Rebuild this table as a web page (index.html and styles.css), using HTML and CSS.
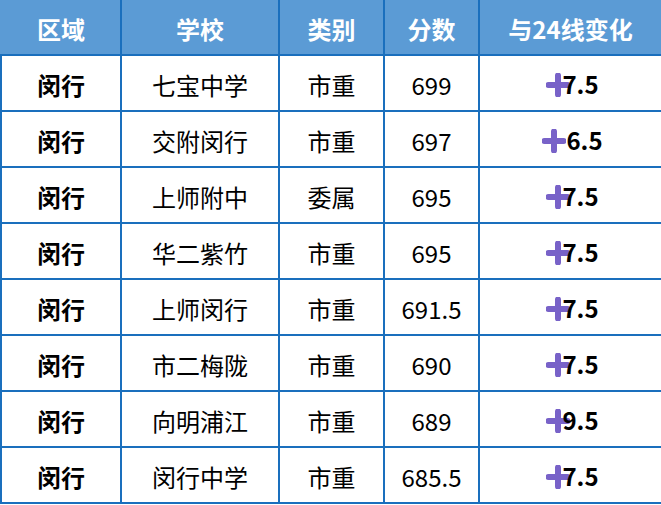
FILE: index.html
```html
<!DOCTYPE html>
<html>
<head>
<meta charset="utf-8">
<link rel="stylesheet" href="styles.css">
</head>
<body>
<table class="score">
<colgroup>
<col class="c1"><col class="c2"><col class="c3"><col class="c4"><col class="c5">
</colgroup>
<thead>
<tr><th>区域</th><th>学校</th><th>类别</th><th>分数</th><th>与24线变化</th></tr>
</thead>
<tbody>
<tr><td class="area">闵行</td><td>七宝中学</td><td>市重</td><td>699</td><td class="chg"><span class="plus"><svg viewBox="0 0 24 24" width="24" height="24"><path d="M12 2.5V21.5M2.5 12H21.5" stroke="#7862c8" stroke-width="6" stroke-linecap="round"/></svg></span><b>7.5</b></td></tr>
<tr><td class="area">闵行</td><td>交附闵行</td><td>市重</td><td>697</td><td class="chg"><span class="plus wide"><svg viewBox="0 0 24 24" width="24" height="24"><path d="M12 2.5V21.5M2.5 12H21.5" stroke="#7862c8" stroke-width="6" stroke-linecap="round"/></svg></span><b>6.5</b></td></tr>
<tr><td class="area">闵行</td><td>上师附中</td><td>委属</td><td>695</td><td class="chg"><span class="plus"><svg viewBox="0 0 24 24" width="24" height="24"><path d="M12 2.5V21.5M2.5 12H21.5" stroke="#7862c8" stroke-width="6" stroke-linecap="round"/></svg></span><b>7.5</b></td></tr>
<tr><td class="area">闵行</td><td>华二紫竹</td><td>市重</td><td>695</td><td class="chg"><span class="plus"><svg viewBox="0 0 24 24" width="24" height="24"><path d="M12 2.5V21.5M2.5 12H21.5" stroke="#7862c8" stroke-width="6" stroke-linecap="round"/></svg></span><b>7.5</b></td></tr>
<tr><td class="area">闵行</td><td>上师闵行</td><td>市重</td><td>691.5</td><td class="chg"><span class="plus"><svg viewBox="0 0 24 24" width="24" height="24"><path d="M12 2.5V21.5M2.5 12H21.5" stroke="#7862c8" stroke-width="6" stroke-linecap="round"/></svg></span><b>7.5</b></td></tr>
<tr><td class="area">闵行</td><td>市二梅陇</td><td>市重</td><td>690</td><td class="chg"><span class="plus"><svg viewBox="0 0 24 24" width="24" height="24"><path d="M12 2.5V21.5M2.5 12H21.5" stroke="#7862c8" stroke-width="6" stroke-linecap="round"/></svg></span><b>7.5</b></td></tr>
<tr><td class="area">闵行</td><td>向明浦江</td><td>市重</td><td>689</td><td class="chg"><span class="plus"><svg viewBox="0 0 24 24" width="24" height="24"><path d="M12 2.5V21.5M2.5 12H21.5" stroke="#7862c8" stroke-width="6" stroke-linecap="round"/></svg></span><b>9.5</b></td></tr>
<tr><td class="area">闵行</td><td>闵行中学</td><td>市重</td><td>685.5</td><td class="chg"><span class="plus"><svg viewBox="0 0 24 24" width="24" height="24"><path d="M12 2.5V21.5M2.5 12H21.5" stroke="#7862c8" stroke-width="6" stroke-linecap="round"/></svg></span><b>7.5</b></td></tr>
</tbody>
</table>
</body>
</html>
```
FILE: styles.css
```css
html, body {
  margin: 0;
  padding: 0;
  background: #ffffff;
}
.score {
  border-collapse: collapse;
  table-layout: fixed;
  width: 661px;
  font-family: "Noto Sans CJK SC", "Noto Sans", sans-serif;
  font-size: 24px;
  color: #000;
}
.c1 { width: 120px; }
.c2 { width: 158px; }
.c3 { width: 105px; }
.c4 { width: 95px; }
.c5 { width: 183px; }
.score th, .score td {
  border: 2px solid #1a6fbd;
  height: 51px;
  padding: 3px 0 0 0;
  text-align: center;
  vertical-align: middle;
  line-height: 1;
}
.score thead th {
  background: #5b9bd5;
  color: #ffffff;
  font-weight: 700;
  border-top: none;
  border-left-color: #5b9bd5;
}
.score thead th + th {
  border-left-color: #1a6fbd;
}
.score thead th:last-child {
  border-right-color: #5b9bd5;
}
.area {
  font-weight: 700;
}
.score td.chg {
  padding-left: 4px;
}
.chg b {
  font-weight: 700;
}
.plus {
  display: inline-block;
  width: 24px;
  height: 24px;
  vertical-align: -3px;
  margin-right: -8px;
}
.plus.wide {
  margin-right: 0;
}
.plus svg {
  display: block;
}
```
